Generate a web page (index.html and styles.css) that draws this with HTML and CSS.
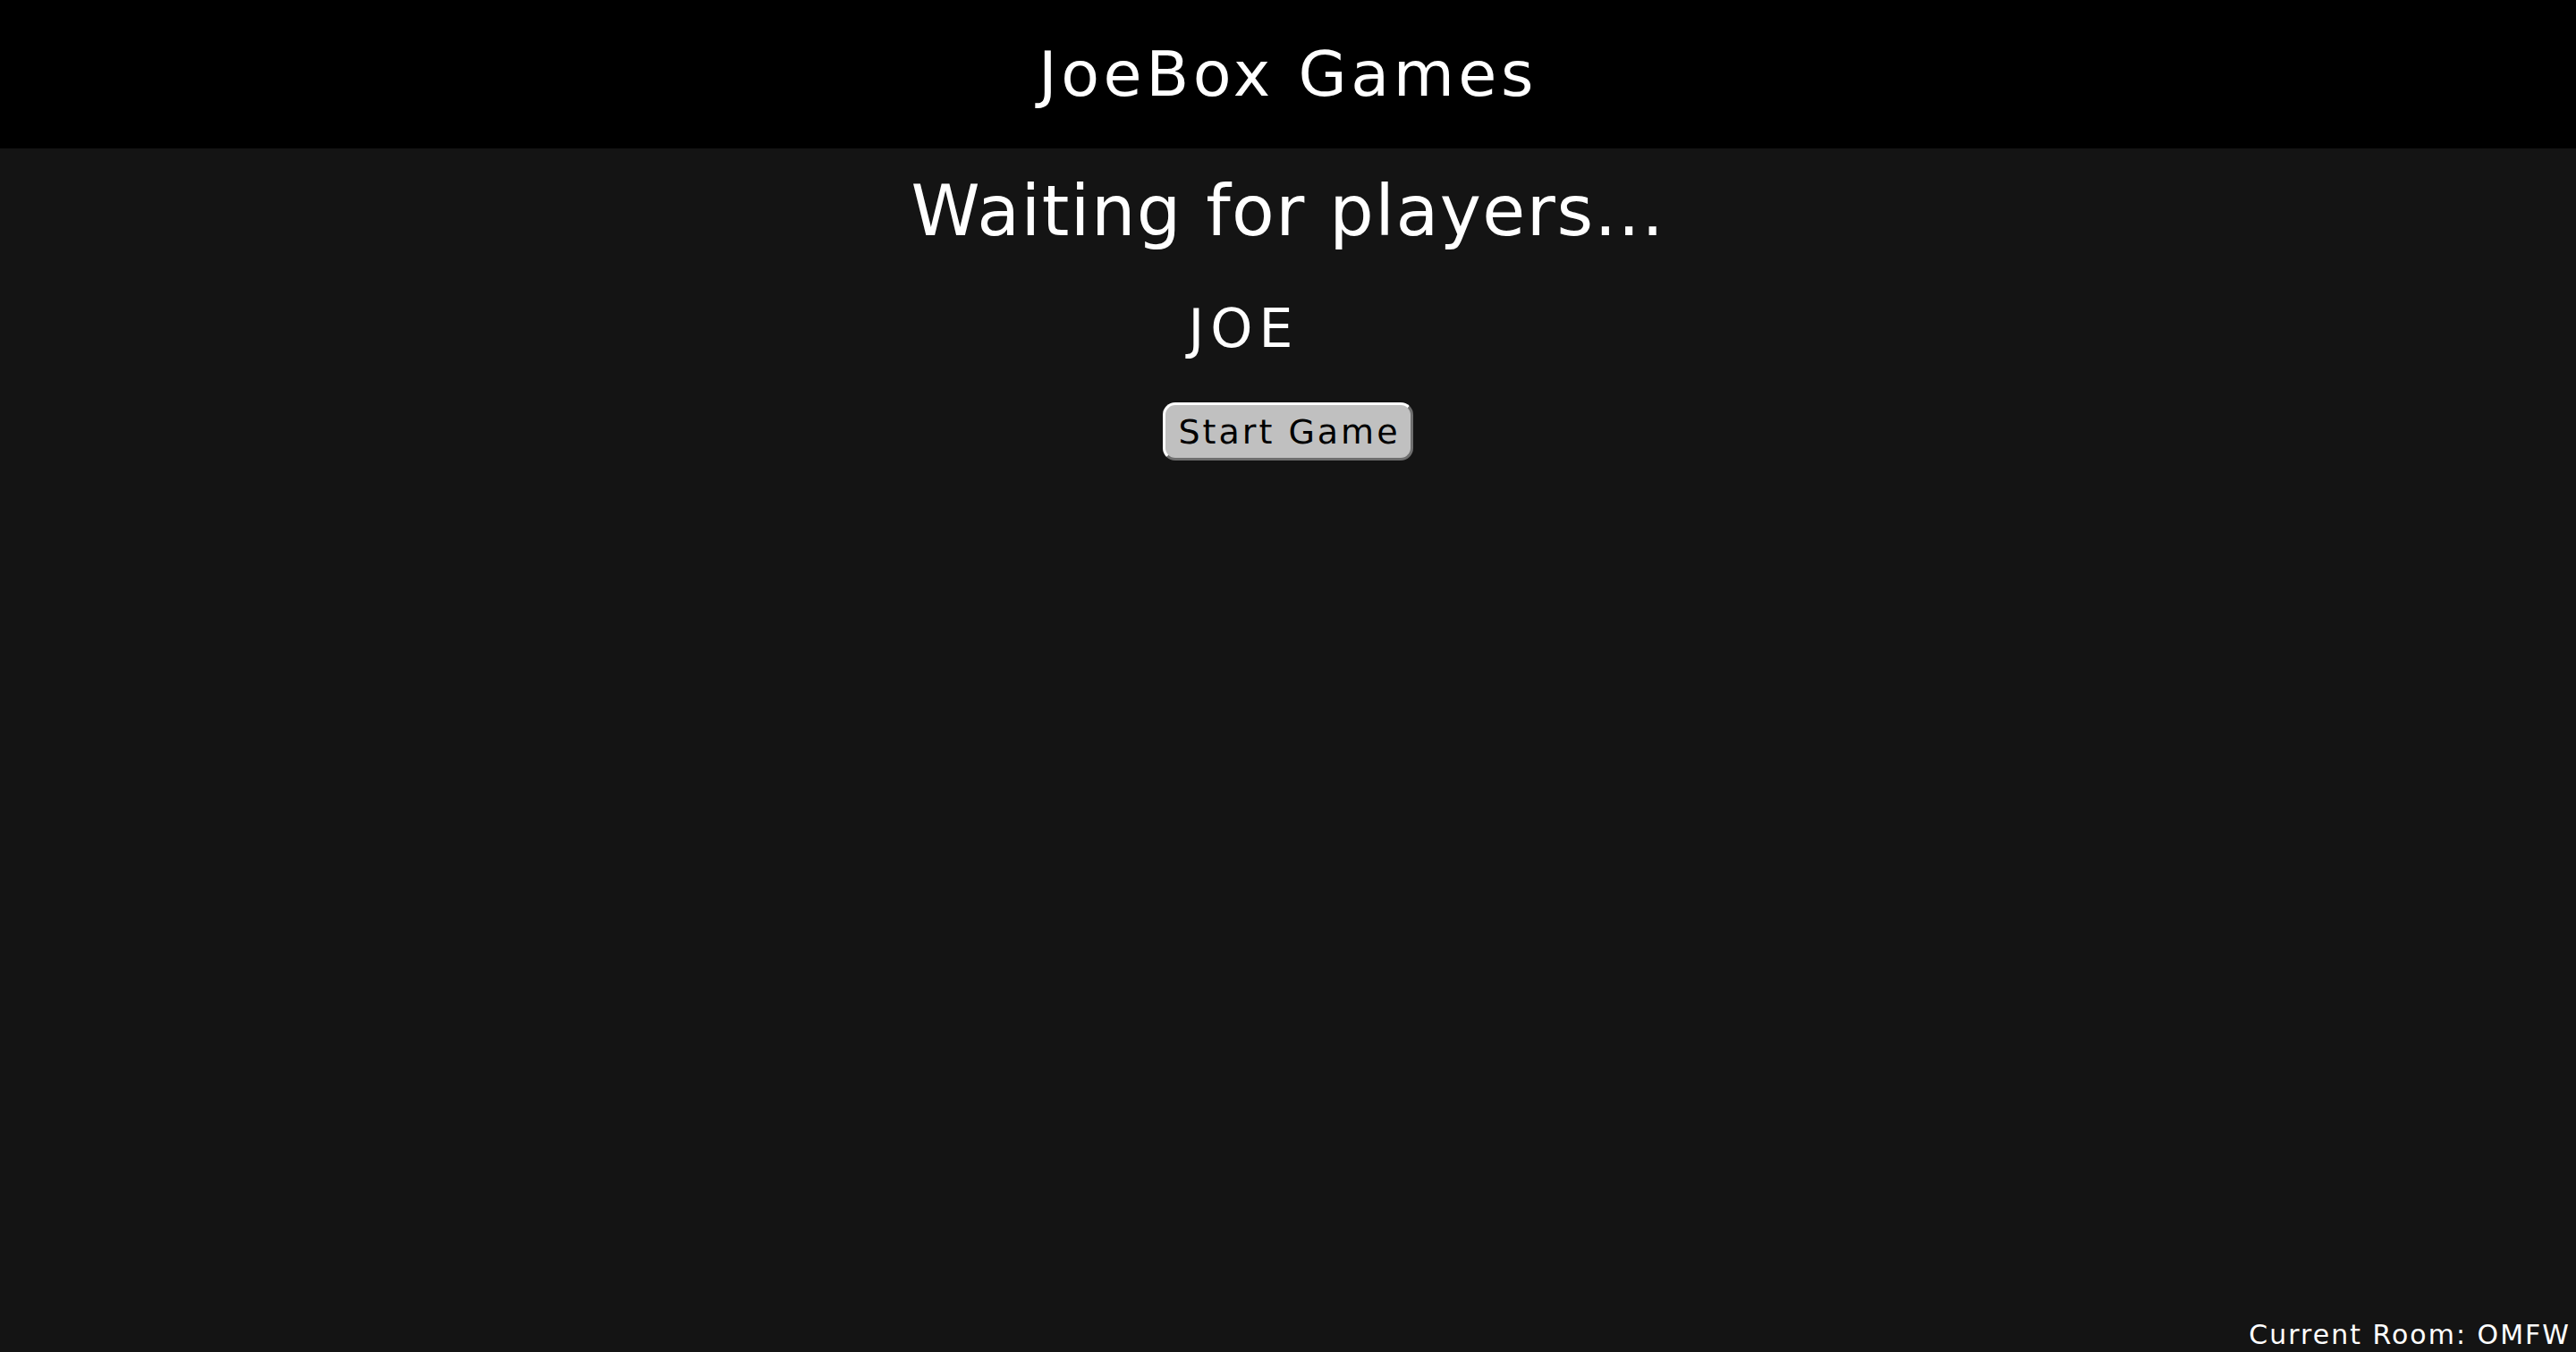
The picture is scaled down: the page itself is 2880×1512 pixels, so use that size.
FILE: index.html
```html
<!DOCTYPE html>
<html lang="en">
<head>
<meta charset="utf-8">
<title>JoeBox Games</title>
<link rel="stylesheet" href="styles.css">
</head>
<body>
<header class="top-bar">
  <h1 class="brand">JoeBox Games</h1>
</header>
<main class="lobby">
  <h2 class="lobby-title">Waiting for players...</h2>
  <ul class="player-list">
    <li class="player">JOE</li>
  </ul>
  <button class="start-btn" type="button">Start Game</button>
</main>
<footer class="room-info">Current Room: OMFW</footer>
</body>
</html>
```

FILE: styles.css
```css
html, body {
  margin: 0;
  padding: 0;
}

body {
  background: #141414;
  color: #ffffff;
  font-family: "DejaVu Sans", "Liberation Sans", sans-serif;
  min-height: 100vh;
  display: flex;
  flex-direction: column;
  overflow: hidden;
}

.top-bar {
  background: #000000;
  height: 166px;
  display: flex;
  align-items: center;
  justify-content: center;
  flex: 0 0 auto;
}

.brand {
  margin: 0;
  font-size: 70px;
  font-weight: normal;
  letter-spacing: 4.5px;
  line-height: normal;
}

.lobby {
  flex: 1 1 auto;
  display: flex;
  flex-direction: column;
  align-items: center;
  padding-top: 25px;
}

.lobby-title {
  margin: 0;
  font-size: 78px;
  font-weight: normal;
  letter-spacing: 1.5px;
  line-height: normal;
}

.player-list {
  list-style: none;
  margin: 51px 0 0 0;
  padding: 0 99px 0 0;
  text-align: center;
}

.player {
  font-size: 60px;
  letter-spacing: 7px;
  line-height: normal;
}

.start-btn {
  margin-top: 48px;
  font-family: "DejaVu Sans", "Liberation Sans", sans-serif;
  font-size: 38px;
  letter-spacing: 3px;
  line-height: normal;
  color: #000000;
  background: #c0c0c0;
  border: 3px solid;
  border-color: #ffffff #6e6e6e #6e6e6e #ffffff;
  border-radius: 14px;
  padding: 7px 11px 7px 14px;
  width: 280px;
  height: 65px;
  box-sizing: border-box;
  white-space: nowrap;
}

.room-info {
  flex: 0 0 auto;
  text-align: right;
  font-size: 30px;
  letter-spacing: 2px;
  line-height: normal;
  padding: 0 6px 2px 0;
}
```
